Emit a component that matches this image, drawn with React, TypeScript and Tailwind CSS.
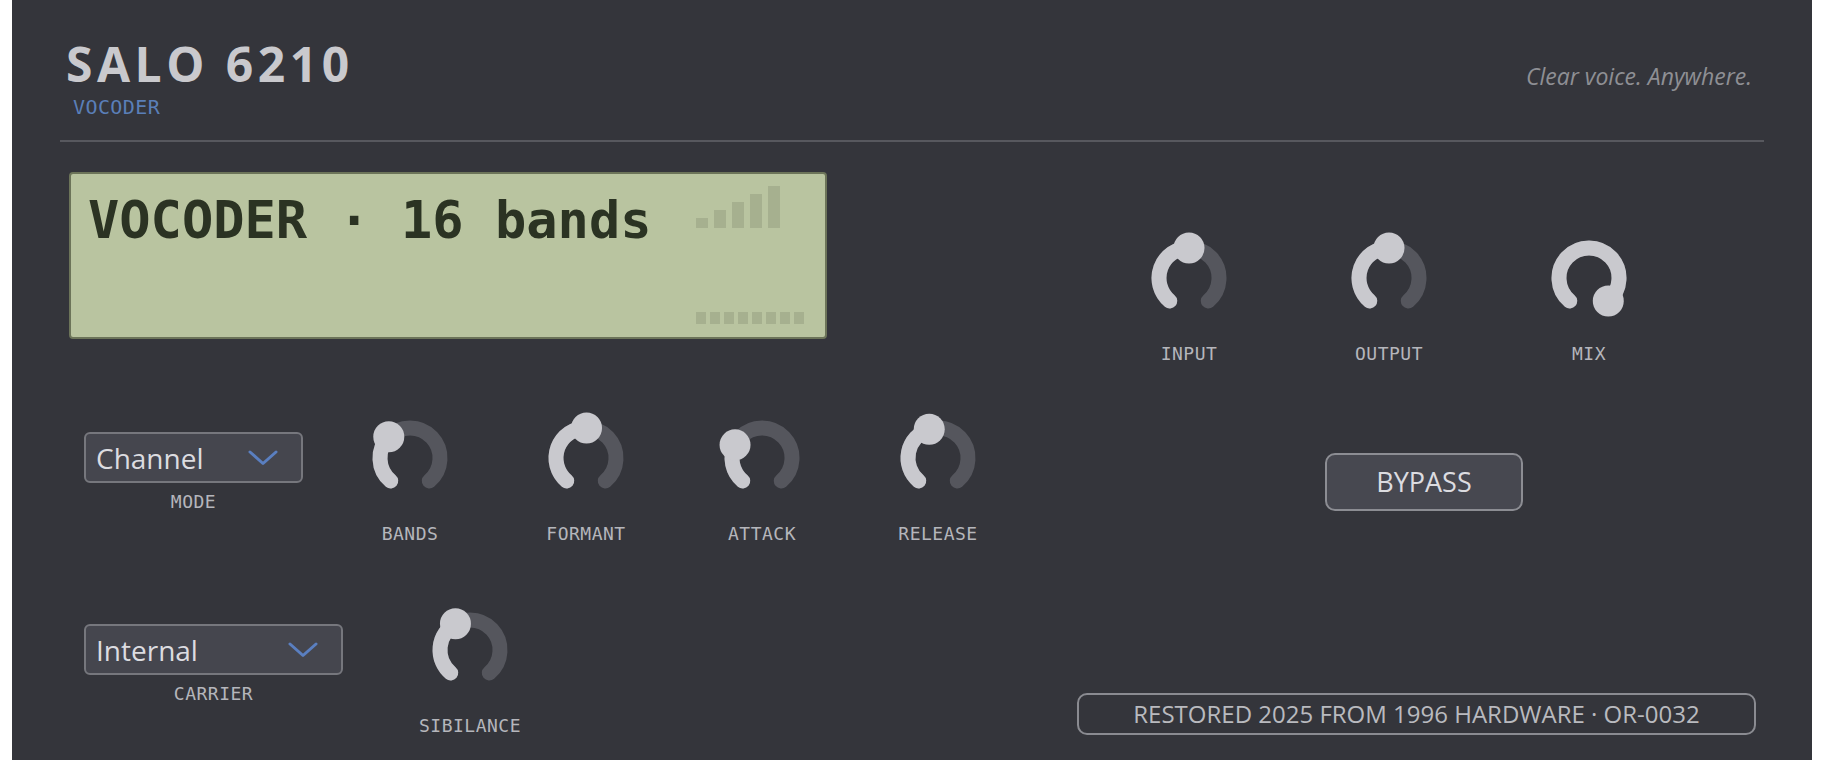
import React from 'react';

const KNOB_MIN = -140;
const KNOB_MAX = 140;

function polar(a: number, r = 30, c = 46) {
  const rad = (a * Math.PI) / 180;
  return [c + r * Math.sin(rad), c - r * Math.cos(rad)];
}

function arc(from: number, to: number) {
  const [x1, y1] = polar(from);
  const [x2, y2] = polar(to);
  const large = to - from > 180 ? 1 : 0;
  return `M ${x1} ${y1} A 30 30 0 ${large} 1 ${x2} ${y2}`;
}

function Knob({ label, angle, className = '' }: { label: string; angle: number; className?: string }) {
  const [dx, dy] = polar(angle);
  return (
    <div className={`flex w-[100px] flex-col items-center ${className}`}>
      <svg width="92" height="92" viewBox="0 0 92 92">
        <path d={arc(KNOB_MIN, KNOB_MAX)} stroke="#55565d" strokeWidth="15" fill="none" strokeLinecap="round" />
        {angle > KNOB_MIN && (
          <path d={arc(KNOB_MIN, angle)} stroke="#c9c9ce" strokeWidth="15" fill="none" strokeLinecap="round" />
        )}
        <circle cx={dx} cy={dy} r="15.5" fill="#c9c9ce" />
      </svg>
      <span className="mt-[21px] whitespace-nowrap font-['DejaVu_Sans_Mono',monospace] text-[18px] leading-[18px] tracking-[0.5px] text-[#b5b6bb]">
        {label}
      </span>
    </div>
  );
}

function Chevron() {
  return (
    <svg width="30" height="16" viewBox="0 0 30 16">
      <polyline points="2,2 15,13.5 28,2" fill="none" stroke="#5a7fc0" strokeWidth="3" strokeLinecap="round" strokeLinejoin="round" />
    </svg>
  );
}

function Select({ value, label, width }: { value: string; label: string; width: string }) {
  return (
    <div className={`flex flex-col items-center ${width}`}>
      <div className="mt-[20px] flex h-[51px] w-full items-center justify-between rounded-[6px] border-2 border-[#76777d] bg-[#45464e] pl-[10px] pr-[23px]">
        <span className="font-['Open_Sans',sans-serif] text-[28px] leading-[28px] text-[#dcdce0]">{value}</span>
        <Chevron />
      </div>
      <span className="mt-[10px] font-['DejaVu_Sans_Mono',monospace] text-[18px] leading-[18px] tracking-[0.5px] text-[#b5b6bb]">
        {label}
      </span>
    </div>
  );
}

function Lcd() {
  const bars = [10, 18, 26, 34, 42];
  return (
    <div className="flex h-[167px] w-[758px] rounded-[4px] border-2 border-[#6c7459] bg-[#b9c4a0] pl-[17px] pr-[21px] pt-[12px] pb-[13px]">
      <div className="flex-1 pt-[8px] font-['DejaVu_Sans_Mono',monospace] text-[52px] font-bold leading-none text-[#2b3323]">
        VOCODER · 16 bands
      </div>
      <div className="flex w-[108px] flex-col justify-between">
        <div className="flex h-[42px] items-end gap-[6px]">
          {bars.map((h) => (
            <div key={h} className="w-[12px] bg-[#a6b08f]" style={{ height: h }} />
          ))}
        </div>
        <div className="flex gap-[4px]">
          {Array.from({ length: 8 }).map((_, i) => (
            <div key={i} className="h-[12px] w-[10px] bg-[#a6b08f]" />
          ))}
        </div>
      </div>
    </div>
  );
}

export default function App() {
  return (
    <div className="bg-white px-[12px]">
      <div className="h-[760px] overflow-hidden bg-[#34353b] px-[48px]">
        <header className="flex items-start justify-between border-b-2 border-[#57585e] px-[6px] pt-[40px] pb-[23px]">
          <div>
            <h1 className="font-['Open_Sans',sans-serif] text-[48px] font-bold leading-none tracking-[4.5px] text-[#c9c9cd]">
              SALO 6210
            </h1>
            <div className="ml-[7px] mt-[9px] font-['DejaVu_Sans_Mono',monospace] text-[20px] leading-[20px] tracking-[0.4px] text-[#5a7fb8]">
              VOCODER
            </div>
          </div>
          <p className="mt-[25px] pr-[6px] font-['Open_Sans',sans-serif] text-[23px] italic leading-[23px] text-[#8e8f94]">
            Clear voice. Anywhere.
          </p>
        </header>

        <div className="flex pl-[9px]">
          <div className="w-[1008px] pt-[30px]">
            <Lcd />
            <div className="mt-[73px] flex items-start pl-[15px]">
              <Select value="Channel" label="MODE" width="w-[219px]" />
              <Knob label="BANDS" angle={-45} className="ml-[57px]" />
              <Knob label="FORMANT" angle={1} className="ml-[76px]" />
              <Knob label="ATTACK" angle={-64} className="ml-[76px]" />
              <Knob label="RELEASE" angle={-17} className="ml-[76px]" />
            </div>
            <div className="mt-[61px] flex items-start pl-[15px]">
              <Select value="Internal" label="CARRIER" width="w-[259px]" />
              <Knob label="SIBILANCE" angle={-29} className="ml-[77px]" />
            </div>
          </div>

          <div className="w-[679px] pt-[90px]">
            <div className="ml-[62px] flex gap-[100px]">
              <Knob label="INPUT" angle={0} />
              <Knob label="OUTPUT" angle={0} />
              <Knob label="MIX" angle={140} />
            </div>
            <button className="ml-[248px] mt-[90px] flex h-[58px] w-[198px] items-center justify-center rounded-[10px] border-2 border-[#8c8d93] bg-[#474850] font-['Open_Sans',sans-serif] text-[27px] text-[#dcdce0]">
              BYPASS
            </button>
            <div className="mt-[182px] flex h-[42px] w-full items-center justify-center rounded-[10px] border-2 border-[#8a8b91] font-['Open_Sans',sans-serif] text-[24px] text-[#b9babf]">
              RESTORED 2025 FROM 1996 HARDWARE · OR-0032
            </div>
          </div>
        </div>
      </div>
    </div>
  );
}
